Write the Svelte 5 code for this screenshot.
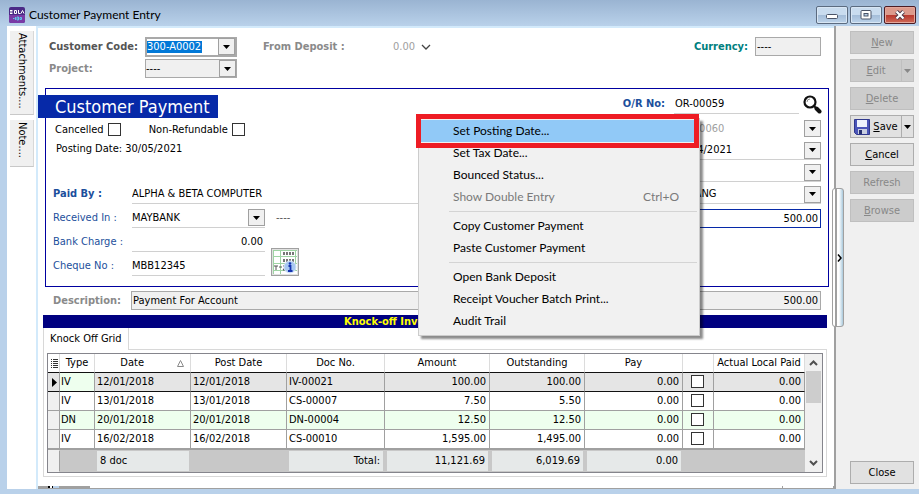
<script>
  const rows = [
    { type: 'IV', date: '12/01/2018', doc: 'IV-00021', amount: '100.00', outstanding: '100.00' },
    { type: 'IV', date: '13/01/2018', doc: 'CS-00007', amount: '7.50', outstanding: '5.50' },
    { type: 'DN', date: '20/01/2018', doc: 'DN-00004', amount: '12.50', outstanding: '12.50' },
    { type: 'IV', date: '16/02/2018', doc: 'CS-00010', amount: '1,595.00', outstanding: '1,495.00' }
  ];

  const menu = [
    { label: 'Set Posting Date...', active: true },
    { label: 'Set Tax Date...' },
    { label: 'Bounced Status...' },
    { label: 'Show Double Entry', shortcut: 'Ctrl+O', disabled: true },
    null,
    { label: 'Copy Customer Payment' },
    { label: 'Paste Customer Payment' },
    null,
    { label: 'Open Bank Deposit' },
    { label: 'Receipt Voucher Batch Print...' },
    { label: 'Audit Trail' }
  ];
</script>

{#snippet arrow()}
  <span class="arrow"><svg width="7" height="4" viewBox="0 0 7 4"><path d="M0 0h7L3.5 4z" fill="currentColor" /></svg></span>
{/snippet}

<div class="window">
  <header class="titlebar">
    <svg class="logo" width="16" height="16" viewBox="0 0 16 16">
      <rect width="16" height="16" rx="2" fill="#4b2a86" />
      <path d="M0 8h16v6a2 2 0 0 1-2 2H2a2 2 0 0 1-2-2z" fill="#7a3aa6" />
      <path d="M1 3.500h2.500M1 5h2.500M1 6.500h2.500M5.500 3.500h2v3h-2zM9.500 3v3.500h2M12 6.500L13.500 3.500l1.500 3" stroke="#fff" fill="none" />
      <path d="M4 11.500h1.500M6.500 10v3M8 10v3h1.500v-3zM11 10.500h1.500v2H11z" stroke="#5fc4e8" fill="none" />
    </svg>
    <h1>Customer Payment Entry</h1>
    <div class="winbtns">
      <button aria-label="Minimize"><svg width="12" height="10" viewBox="0 0 12 10"><rect x=".5" y="4.500" width="11" height="4" rx="1" fill="#fff" stroke="#4a5468" /></svg></button>
      <button aria-label="Restore"><svg width="12" height="10" viewBox="0 0 12 10"><rect x="1" y=".5" width="10" height="8.500" rx="1" fill="#fff" stroke="#4a5468" /><rect x="4" y="3.500" width="4" height="2.500" fill="#b9d1ea" stroke="#4a5468" /></svg></button>
      <button class="red" aria-label="Close window"><svg width="12" height="10" viewBox="0 0 12 10"><path d="M2.500 1.500l7 7M9.500 1.500l-7 7" stroke="#4a3c4c" stroke-width="4" /><path d="M2.500 1.500l7 7M9.500 1.500l-7 7" stroke="#fff" stroke-width="2.200" /></svg></button>
    </div>
  </header>

  <div class="body">
    <nav class="side">
      <button class="att">Attachments....</button>
      <button class="note">Note....</button>
    </nav>

    <main>
      <div class="top">
        <label for="code" class="b dark">Customer Code:</label>
        <div class="codebox"><input id="code" value="300-A0002" /><button aria-label="Choose customer">{@render arrow()}</button></div>
        <span class="b grey">From Deposit :</span>
        <button class="deposit">0.00 <svg width="10" height="6" viewBox="0 0 10 6"><path d="M1 1l4 4 4-4" fill="none" stroke="#444" stroke-width="1.300" /></svg></button>
        <label for="cur" class="b teal">Currency:</label>
        <input id="cur" class="filled" value="----" />
        <label for="proj" class="b grey">Project:</label>
        <div class="combo proj"><select id="proj"><option>----</option></select>{@render arrow()}</div>
      </div>

      <section class="payment">
        <div class="left">
          <h2>Customer Payment</h2>
          <div class="checks">
            <label>Cancelled <input type="checkbox" /></label>
            <label>Non-Refundable <input type="checkbox" /></label>
          </div>
          <p>Posting Date: 30/05/2021</p>
          <div class="form">
            <label for="paid" class="b">Paid By :</label>
            <input id="paid" class="line wide" value="ALPHA &amp; BETA COMPUTER" />
            <label for="recv">Received In :</label>
            <div class="combo line"><select id="recv"><option>MAYBANK</option></select>{@render arrow()}</div>
            <span class="dash">----</span>
            <label for="charge">Bank Charge :</label>
            <input id="charge" class="line num" value="0.00" />
            <button class="calc" aria-label="Calculator">
              <svg width="24" height="24" viewBox="0 0 24 24">
                <rect width="24" height="24" fill="#fff" />
                <path d="M0 .5h24M0 6.500h24M0 13.500h24M0 20.500h24M.5 0v24M7.500 0v24M22.500 0v21" stroke="#9fd4a4" fill="none" />
                <path d="M10 3.500h11M10 10.500h11" stroke="#777" stroke-width="3" stroke-dasharray="2 1" />
                <path d="M1 16h4M3 16v4M6 17h3M10 16h3l-3 4h3" stroke="#555" fill="none" />
                <circle cx="17" cy="17" r="6" fill="#a9c8f2" stroke="#d5e4f8" />
                <circle cx="17" cy="13.500" r="1.300" fill="#1433b0" />
                <path d="M15.500 16h2v5M15 21h4.500" stroke="#1433b0" stroke-width="1.800" fill="none" />
              </svg>
            </button>
            <label for="cheque">Cheque No :</label>
            <input id="cheque" class="line" value="MBB12345" />
          </div>
        </div>

        <div class="right">
          <div class="orno">
            <label for="orno" class="b">O/R No:</label>
            <input id="orno" class="line" value="OR-00059" />
            <button class="find" aria-label="Search"><svg width="19" height="19" viewBox="0 0 19 19"><circle cx="7" cy="7" r="5.500" fill="#fff" stroke="#111" stroke-width="2.200" /><path d="M4 7a3 3 0 0 1 3-3" fill="none" stroke="#888" /><path d="M11 11l2 2" stroke="#111" stroke-width="2" /><path d="M13.500 13.500l3 3" stroke="#111" stroke-width="4" stroke-linecap="round" /></svg></button>
          </div>
          <div class="combo off"><select aria-label="Next number"><option>OR-00060</option></select>{@render arrow()}</div>
          <div class="combo line"><select aria-label="Date"><option>30/04/2021</option></select>{@render arrow()}</div>
          <div class="combo line"><select aria-label="Agent"><option></option></select>{@render arrow()}</div>
          <div class="combo line"><select aria-label="Area"><option>PENANG</option></select>{@render arrow()}</div>
          <input class="amount num" aria-label="Amount" value="500.00" />
        </div>
      </section>

      <div class="desc">
        <label for="desc" class="b grey">Description:</label>
        <div class="descbox"><input id="desc" value="Payment For Account" /><output>500.00</output></div>
      </div>

      <h3>Knock-off Invoice</h3>
      <div class="tabs"><button>Knock Off Grid</button></div>
      <div class="panel">
        <div class="grid">
          <table>
            <colgroup>
              <col class="w12" /><col class="w35" /><col class="w96" /><col class="w96" /><col /><col class="w105" /><col class="w95" /><col class="w98" /><col class="w31" /><col class="w91" />
            </colgroup>
            <thead>
              <tr>
                <th aria-label="Columns"><svg width="8" height="11" viewBox="0 0 8 11"><path d="M0 1.500h1M0 3.500h1M0 5.500h1M0 7.500h1M0 9.500h1M2 1.500h5M2 3.500h5M2 5.500h5M2 7.500h5M2 9.500h5" stroke="#333" /></svg></th>
                <th>Type</th>
                <th><span class="sort"><span>Date</span><svg width="7" height="7" viewBox="0 0 7 7"><path d="M3.500 .5L6.500 6.500H.5z" fill="none" stroke="#888" /></svg></span></th>
                <th>Post Date</th><th>Doc No.</th><th>Amount</th><th>Outstanding</th><th>Pay</th><th aria-label="Selected"></th><th>Actual Local Paid</th>
              </tr>
            </thead>
            <tbody>
              {#each rows as r, i}
                <tr class:current={i === 0} class:alt={i === 2}>
                  <td class="ind">{#if i === 0}<svg width="5" height="9" viewBox="0 0 5 9"><path d="M0 0l5 4.500L0 9z" /></svg>{/if}</td>
                  <td class="type">{r.type}</td><td>{r.date}</td><td>{r.date}</td><td>{r.doc}</td>
                  <td class="num">{r.amount}</td><td class="num">{r.outstanding}</td><td class="num">0.00</td>
                  <td class="chk"><input type="checkbox" aria-label="Knock off {r.doc}" /></td>
                  <td class="num">0.00</td>
                </tr>
              {/each}
            </tbody>
            <tfoot>
              <tr>
                <td class="ind"></td><td></td><td class="sum">8 doc</td><td></td><td class="sum num">Total:</td><td class="sum num">11,121.69</td><td class="sum num">6,019.69</td><td class="sum num">0.00</td><td></td><td></td>
              </tr>
            </tfoot>
          </table>
          <div class="scroll">
            <svg width="9" height="6" viewBox="0 0 9 6"><path d="M1 5l3.500-3.500L8 5" fill="none" stroke="#505050" stroke-width="2" /></svg>
            <span class="thumb"></span>
            <svg width="9" height="6" viewBox="0 0 9 6"><path d="M1 1l3.500 3.500L8 1" fill="none" stroke="#505050" stroke-width="2" /></svg>
          </div>
        </div>
      </div>
      <div class="foot"><span></span><i></i></div>
    </main>

    <aside>
      <button disabled><u>N</u>ew</button>
      <div class="split"><button disabled><span><u>E</u>dit</span></button><button disabled aria-label="Edit options">{@render arrow()}</button></div>
      <button disabled><u>D</u>elete</button>
      <div class="split"><button><svg width="16" height="16" viewBox="0 0 16 16"><path d="M.5 .5h15v15h-13l-2-2z" fill="#4a55b8" stroke="#30388c" /><path d="M3 1h10v7H3z" fill="#eef3fc" /><path d="M4 10h9v5H4z" fill="#c9cfe0" /><path d="M5 11h3v4H5z" fill="#273070" /></svg><span><u>S</u>ave</span></button><button aria-label="Save options">{@render arrow()}</button></div>
      <button><u>C</u>ancel</button>
      <button disabled>Refresh</button>
      <button disabled><u>B</u>rowse</button>
      <button class="close">Close</button>
      <button class="handle" aria-label="Toggle panel"><svg width="5" height="8" viewBox="0 0 5 8"><path d="M1 .5L4 4 1 7.500" fill="none" stroke="#000" stroke-width="1.500" /></svg></button>
    </aside>
  </div>

  <div class="menu" role="menu">
    {#each menu as m}
      {#if m}
        <button role="menuitem" class:active={m.active} disabled={m.disabled}><span>{m.label}</span><span>{m.shortcut ?? ''}</span></button>
      {:else}
        <hr />
      {/if}
    {/each}
    <div class="mark"></div>
  </div>
</div>

<style>
  .window { position: relative; display: flex; flex-direction: column; min-height: 100vh; box-sizing: border-box; background: #b9d1ea; font: 11px/14px "DejaVu Sans Condensed", "DejaVu Sans", sans-serif; color: #000; overflow: hidden; }
  .window :is(*, *::before) { box-sizing: border-box; }
  h1, h2, h3, p { margin: 0; font-weight: normal; }
  button, input, select { font: inherit; color: inherit; margin: 0; padding: 0; border: 0; border-radius: 0; background: none; min-width: 0; }
  select, input[type="checkbox"] { appearance: none; }
  svg { display: block; flex: none; }

  .titlebar { display: flex; align-items: center; height: 26px; padding: 3px 3px 0 9px; background: linear-gradient(#9ab4d2, #b9d1ea); }
  h1 { flex: 1; margin-left: 4px; font: 12px/18px Lato, sans-serif; }
  .winbtns { display: flex; gap: 2px; }
  .winbtns button { display: grid; place-items: center; width: 32px; height: 18px; border: 1px solid #5b6b80; border-radius: 2px; background: linear-gradient(#c9dcef 50%, #a3bcd8 50%, #bcd3ea); box-shadow: inset 0 0 0 1px #d8e6f4; }
  .winbtns .red { border-color: #4c1c24; background: linear-gradient(#dc9a8c 50%, #b8372c 50%, #cf6a58); box-shadow: inset 0 0 0 1px #e4a79b; }

  .body { flex: 1; display: flex; margin: 0 0 5px 7px; background: #fff; }
  .side { display: flex; flex-direction: column; gap: 5px; width: 29px; padding: 5px 0 0 3px; }
  .side button { width: 24px; writing-mode: vertical-rl; text-align: left; padding-top: 2px; background: #f0f0f0; border-bottom: 1px solid #c8c8c8; border-right: 1px solid #d8d8d8; }
  .att { height: 84px; }
  .note { height: 47px; }

  main { flex: 1; min-width: 0; display: flex; flex-direction: column; padding: 9px 0 0; border: solid #d3eafb; border-width: 2px 0 0 2px; }
  .b { font-weight: bold; }
  .dark { color: #555; }
  .grey { color: #8a8a8a; }
  .teal { color: #008080; }
  .num { text-align: right; }

  .top { display: grid; grid-template-columns: 96px 92px 26px 130px 1fr auto 66px; grid-template-rows: 19px 19px; row-gap: 3px; align-items: center; padding: 0 13px 0 11px; }
  .top > span { grid-column: 4; }
  .deposit { grid-column: 5; justify-self: start; display: flex; align-items: center; gap: 6px; color: #a0a0a0; }
  .teal { margin-right: 7px; }
  .filled { width: 100%; height: 19px; border: 1px solid #a9a9a9; background: #f0f0f0; padding-left: 1px; }
  .codebox { display: flex; align-items: center; height: 20px; border: 2px solid #a9a9a9; background: #fff; }
  .codebox input { width: 55px; height: 12px; background: #0078d7; color: #fff; }
  .codebox button { margin-left: auto; }
  .combo { display: grid; align-items: center; height: 19px; }
  .combo > select { grid-area: 1 / 1; width: 100%; height: 100%; }
  .arrow { display: grid; place-items: center; width: 17px; height: 17px; border: 1px solid #a0a0a0; background: #f0f0f0; color: #000; }
  .combo > .arrow { grid-area: 1 / 1; justify-self: end; pointer-events: none; }
  .proj { border: 1px solid #a9a9a9; background: #f0f0f0; }

  .payment { display: flex; justify-content: space-between; margin: 10px 5px 0 7px; padding: 5px 7px 10px; border: 1px solid #0000a0; }
  .left { flex: 1; min-width: 0; padding-top: 1px; }
  h2 { width: 180px; height: 23px; margin-left: -15px; padding-left: 17px; font-size: 18px; line-height: 24px; background: #0629a8; color: #fff; }
  .checks { display: flex; gap: 28px; height: 23px; padding-left: 2px; }
  .checks label { display: flex; align-items: center; gap: 4px; }
  input[type="checkbox"] { width: 13px; height: 13px; border: 1px solid #333; background: #fff; }
  p { padding: 1px 3px; }
  .form { display: grid; grid-template-columns: 79px 133px 28px 1fr; grid-auto-rows: 20px; gap: 4px 0; margin-top: 27px; align-items: center; color: #000; }
  .form label { color: #1c4f9c; }
  .form .line { height: 20px; }
  .form .num { padding-right: 2px; }
  .line { border-bottom: 1px solid #d0d0d0; }
  .wide { grid-column: 2 / -1; }
  .dash { grid-column: 3 / -1; padding-left: 11px; color: #555; }
  .calc { grid-column: 3 / 5; grid-row: 3 / 5; align-self: end; display: grid; place-items: center; width: 28px; height: 28px; margin-left: 6px; border: 1px solid #a0a0a0; background: #e1e1e1; }
  .right { display: flex; flex-direction: column; gap: 3px; align-items: flex-end; }
  .right > .combo, .amount { width: 147px; }
  .right select { padding-left: 1px; }
  .orno { display: flex; height: 20px; margin-bottom: 2px; align-items: center; }
  .orno label { margin-right: 9px; color: #1c4f9c; }
  .orno input { width: 125px; height: 20px; padding-left: 1px; }
  .find { width: 22px; padding-left: 4px; }
  .off select { color: #a0a0a0; }
  .amount { height: 19px; margin-top: 2px; padding-right: 2px; border: 1px solid #0629a8; }

  .desc { display: flex; align-items: center; margin: 4px 13px 0 15px; }
  .desc label { width: 78px; }
  .descbox { flex: 1; display: flex; align-items: center; height: 19px; padding: 0 2px 0 1px; border: 1px solid #a9a9a9; background: #f0f0f0; }
  .descbox input { flex: 1; }
  h3 { height: 13px; margin: 5px 7px 0 5px; padding-left: 301px; font: bold 11px/13px "DejaVu Sans Condensed", sans-serif; background: #000080; color: #ff0; }
  .tabs { height: 21px; margin-left: 5px; display: flex; }
  .tabs button { position: relative; padding: 0 6px; border: solid #d8d8d8; border-width: 0 1px; margin-bottom: -1px; background: #fff; }
  .panel { margin: 0 7px 0 5px; padding: 3px; border: 1px solid #d8d8d8; }
  .grid { display: flex; border: 1px solid #85858c; }
  table { flex: 1; width: 0; table-layout: fixed; border-collapse: separate; border-spacing: 0; }
  .w12 { width: 12px; } .w35 { width: 35px; } .w96 { width: 96px; } .w105 { width: 105px; } .w95 { width: 95px; } .w98 { width: 98px; } .w31 { width: 31px; } .w91 { width: 91px; }
  th { height: 19px; padding: 0; font-weight: normal; border-right: 1px solid #dcdcdc; border-bottom: 1px solid #111; overflow: hidden; white-space: nowrap; }
  th svg { margin-left: 3px; }
  .sort { display: flex; align-items: center; justify-content: flex-end; padding-right: 6px; gap: 30px; }
  tbody td { height: 19px; padding: 0 3px 1px 2px; border-right: 1px solid #a0a0a0; border-bottom: 1px solid #a0a0a0; white-space: nowrap; }
  td.type { padding-left: 1px; }
  td.ind { padding: 0 0 0 4px; background: #f0f0f0; }
  td.chk input { display: block; margin-left: 6px; }
  .current td { background: #e5e5e5; border-bottom-color: #111; }
  .current .type, .alt td:not(.ind) { background: #eeffee; }
  tbody tr:last-child td { border-bottom: 2px solid #a0a0a0; height: 20px; }
  tfoot td { height: 22px; padding: 0 3px; background: #c8c8c8; border: 1px solid #c8c8c8; }
  tfoot td.ind { background: #f0f0f0; border-color: #f0f0f0 #a0a0a0 #f0f0f0 #f0f0f0; }
  tfoot td.sum { background: #e6e9e9; border-width: 1px 2px; }
  .scroll { display: flex; flex-direction: column; align-items: center; width: 17px; padding: 6px 0; background: #f0f0f0; }
  .thumb { width: 15px; height: 32px; margin: 5px 0 auto; background: #cdcdcd; }
  .foot { display: flex; justify-content: space-between; align-items: flex-end; flex: 1; border-bottom: 1px solid #a0a0a0; }
  .foot span { width: 52px; height: 2px; background: linear-gradient(90deg, #a0a0a0 10px, #000 10px 12px, #fff 12px 14px, #000 14px 15px, #b9d1ea 15px 21px, #a0a0a0 21px); }
  .foot i { width: 52px; height: 2px; border: solid #a0a0a0; border-width: 0 1px; }

  aside { position: relative; display: flex; flex-direction: column; gap: 5px; width: 85px; padding: 5px 5px 5px 14px; border-left: 2px solid #a0a0a0; background: #f0f0f0; }
  aside button { height: 23px; border: 1px solid #adadad; background: #e1e1e1; }
  aside button:disabled { color: #888; background: #ccc; border-color: #bfbfbf; }
  aside .close { margin-top: auto; }
  .split { display: flex; }
  .split > button:first-child { flex: 1; display: flex; align-items: center; justify-content: center; gap: 3px; }
  .split > button:last-child { width: 13px; margin-left: -1px; display: grid; place-items: center; }
  .split .arrow { width: auto; height: auto; border: 0; background: none; color: inherit; }
  .handle.handle { position: absolute; left: -4px; top: 162px; width: 12px; height: 139px; padding-left: 4px; border: 1px solid #a0a0a0; border-radius: 3px; background: linear-gradient(90deg, #fff 2px, #a0a0a0 2px 4px, #fff 4px 6px, #a9c9dc); }

  .menu { position: absolute; left: 418px; top: 118px; width: 282px; padding: 1px 2px 3px; border: 1px solid #ccc; background: #f1f1f1; box-shadow: 3px 3px 2px rgba(0, 0, 0, 0.45); font: 12px/22px Lato, sans-serif; }
  .menu button { display: flex; justify-content: space-between; width: 100%; height: 22px; padding: 0 18px 0 32px; }
  .menu button:disabled { color: #7a7a7a; }
  .menu .active { background: #91c9f7; }
  hr { height: 1px; margin: 3px 0 3px 28px; border: 0; background: #d4d4d4; }
  .mark { position: absolute; left: -3px; top: -5px; width: 283px; height: 34px; border: 5px solid #ee1c24; pointer-events: none; }
</style>
